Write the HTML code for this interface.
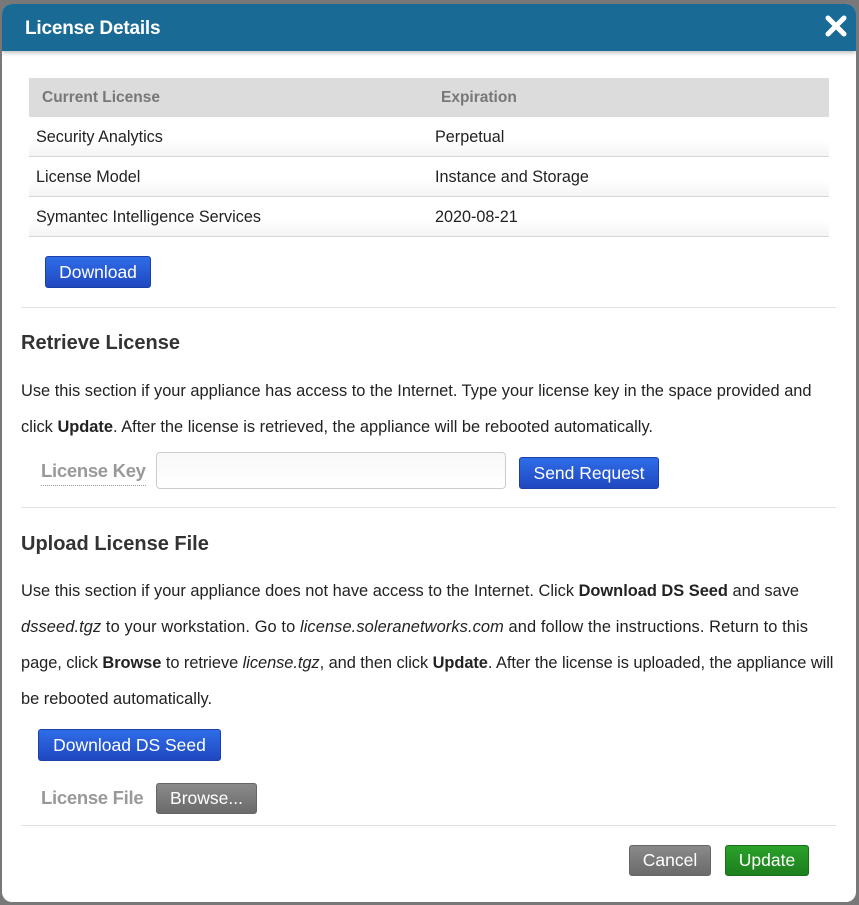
<!DOCTYPE html>
<html><head><meta charset="utf-8"><style>
*{margin:0;padding:0;box-sizing:border-box}
body{width:859px;height:905px;background:#787878;font-family:"Liberation Sans",sans-serif;color:#222;position:relative;overflow:hidden}
.dlg{position:absolute;left:2px;top:4px;width:854px;height:898px;background:#fff;border-radius:10px;overflow:hidden}
.hdr{position:absolute;left:0;top:0;width:100%;height:47px;background:#1a6a96;box-shadow:0 2px 4px rgba(0,0,0,.25)}
.hdr h1{position:absolute;left:23px;top:14px;font-size:19px;font-weight:bold;color:#fff;letter-spacing:-0.2px}
.x{position:absolute;right:8px;top:10px;width:24px;height:24px}
.tbl{position:absolute;left:27px;top:74px;width:800px}
.th{height:39px;background:#dcdcdc;color:#777;font-weight:bold;font-size:15.5px;position:relative}
.tr{height:40px;border-bottom:1px solid #d6d6d6;background:linear-gradient(#fff 60%,#f4f4f4);position:relative;font-size:16.2px}
.c1{position:absolute;left:7px;top:11px;white-space:nowrap}
.c2{position:absolute;left:406px;top:11px;white-space:nowrap}
.th .c1{left:13px;top:11px}.th .c2{left:412px;top:11px}
.btn{position:absolute;border-radius:3px;color:#fff;font-size:17.5px;text-align:center}
.blue{background:linear-gradient(#2f6de8,#1f48c0);border:1px solid #1c3fa8}
.gray{background:linear-gradient(#8a8a8a,#6a6a6a);border:1px solid #666}
.green{background:linear-gradient(#2aa12a,#1d7f1d);border:1px solid #1a701a}
.hr{position:absolute;left:19px;width:815px;height:1px;background:#e2e2e2}
h2{position:absolute;left:19px;font-size:20px;font-weight:bold;color:#333}
.p{position:absolute;left:19px;font-size:16.4px;line-height:36px;white-space:nowrap;color:#222}
.lbl{position:absolute;color:#999;font-weight:bold;font-size:18.5px;letter-spacing:-0.3px}
</style></head><body>
<div class="dlg">
 <div class="hdr"><h1>License Details</h1>
  <svg class="x" viewBox="0 0 24 24"><path d="M4 4L20 20M20 4L4 20" stroke="#fff" stroke-width="5" stroke-linecap="round"/></svg></div>
 <div class="tbl">
  <div class="th"><span class="c1">Current License</span><span class="c2">Expiration</span></div>
  <div class="tr"><span class="c1">Security Analytics</span><span class="c2">Perpetual</span></div>
  <div class="tr"><span class="c1">License Model</span><span class="c2">Instance and Storage</span></div>
  <div class="tr"><span class="c1">Symantec Intelligence Services</span><span class="c2">2020-08-21</span></div>
 </div>
 <div class="btn blue" style="left:43px;top:252px;width:106px;height:32px;line-height:30px">Download</div>
 <div class="hr" style="top:303px"></div>
 <h2 style="top:328px">Retrieve License</h2>
 <div class="p" style="top:369px">Use this section if your appliance has access to the Internet. Type your license key in the space provided and<br>click <b>Update</b>. After the license is retrieved, the appliance will be rebooted automatically.</div>
 <div class="lbl" style="left:39px;top:456px;border-bottom:1px dotted #999;padding-bottom:3px">License Key</div>
 <div style="position:absolute;left:154px;top:448px;width:350px;height:37px;border:1px solid #ccc;border-radius:4px;background:linear-gradient(#f8f8f8,#fff)"></div>
 <div class="btn blue" style="left:517px;top:453px;width:140px;height:32px;line-height:30px">Send Request</div>
 <div class="hr" style="top:503px"></div>
 <h2 style="top:529px">Upload License File</h2>
 <div class="p" style="top:569px">Use this section if your appliance does not have access to the Internet. Click <b>Download DS Seed</b> and save<br><span style="letter-spacing:0.1px"><i>dsseed.tgz</i> to your workstation. Go to <i>license.soleranetworks.com</i> and follow the instructions. Return to this</span><br><span style="letter-spacing:-0.05px">page, click <b>Browse</b> to retrieve <i>license.tgz</i>, and then click <b>Update</b>. After the license is uploaded, the appliance will</span><br>be rebooted automatically.</div>
 <div class="btn blue" style="left:36px;top:725px;width:183px;height:32px;line-height:30px">Download DS Seed</div>
 <div class="lbl" style="left:39px;top:783px">License File</div>
 <div class="btn gray" style="left:154px;top:779px;width:101px;height:31px;line-height:29px">Browse...</div>
 <div class="hr" style="top:821px"></div>
 <div class="btn gray" style="left:627px;top:841px;width:82px;height:31px;line-height:29px">Cancel</div>
 <div class="btn green" style="left:723px;top:841px;width:84px;height:31px;line-height:29px">Update</div>
</div>
</body></html>
